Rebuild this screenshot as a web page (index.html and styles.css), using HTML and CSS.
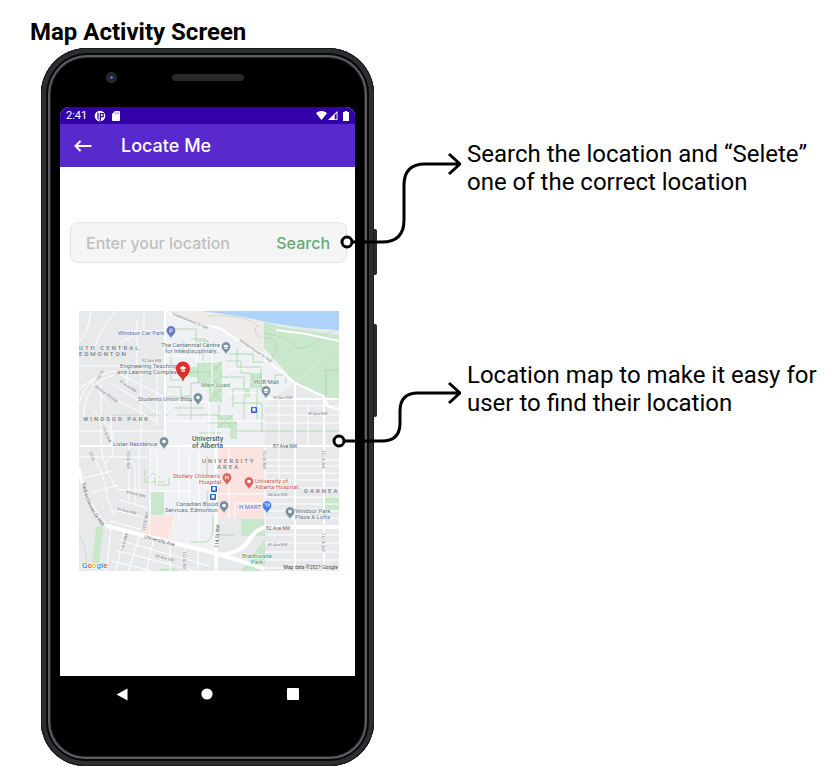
FILE: index.html
```html
<!DOCTYPE html>
<html lang="en">
<head>
<meta charset="utf-8">
<meta name="viewport" content="width=device-width, initial-scale=1">
<title>Map Activity Screen</title>
<link rel="stylesheet" href="styles.css">
</head>
<body>
<main class="board">
  <h1 class="board-title">Map Activity Screen</h1>
  <div class="board-body">
    <section class="phone" aria-label="Phone">
      <span class="side-key power"></span>
      <span class="side-key volume"></span>
      <div class="bezel-top">
        <span class="camera"></span>
        <span class="speaker"></span>
      </div>
      <div class="screen">
        <div class="status-bar">
          <span class="clock">2:41</span>
          <svg class="status-app" width="12" height="12" viewBox="0 0 12 12"><circle cx="6" cy="6" r="5.3" fill="#fff"/><path d="M4 2.500v7M6.300 11V3.500h2.900v3.200H6.300" fill="none" stroke="#3202a8" stroke-width="1.200"/></svg>
          <svg class="status-card" width="8" height="10" viewBox="0 0 8 10"><path d="M3 0h4a1 1 0 0 1 1 1v8a1 1 0 0 1-1 1H1a1 1 0 0 1-1-1V3z" fill="#fff"/><path d="M3.2 1.4v1.8M4.8 1.4v1.8M6.4 1.4v1.8" stroke="#3202a8" stroke-width=".5"/></svg>
          <span class="status-right">
            <svg width="11" height="9" viewBox="0 0 11 9"><path d="M5.5 9 0 2.2C3-.7 8-.7 11 2.2z" fill="#fff"/></svg>
            <svg width="10" height="9" viewBox="0 0 10 9"><path d="M0 9 9.5 0v9z" fill="#fff"/><path d="M6.7 4v4.2h1.9V2.2z" fill="#3202a8"/></svg>
            <svg class="battery" width="6" height="10" viewBox="0 0 6 10"><path d="M1.8 0h2.4v1H6v9H0V1h1.8z" fill="#fff"/></svg>
          </span>
        </div>
        <header class="app-bar">
          <button class="back" type="button" aria-label="Back"><svg width="18" height="12" viewBox="0 0 18 12"><path d="M17.5 6H1.5M6.5 1l-5 5 5 5" fill="none" stroke="#fff" stroke-width="2"/></svg></button>
          <h2 class="app-title">Locate Me</h2>
        </header>
        <div class="content">
          <form class="search">
            <input class="search-input" type="text" aria-label="Location" placeholder="Enter your location">
            <button class="search-button" type="button">Search</button>
          </form>
          <svg class="map" viewBox="0 0 260 260" role="img" aria-label="Campus map">
            <defs>
              <g id="pin"><path d="M0 0C-1-4-4.700-4.700-4.700-8.500a4.700 4.700 0 0 1 9.400 0C4.700-4.700 1-4 0 0z" fill="currentColor" stroke="#f4f6f8" stroke-width=".6"/></g>
              <g id="dot"><use href="#pin"/><circle cy="-8.500" r="1.800" fill="#fff"/></g>
              <g id="cap"><use href="#pin"/><path d="M-3-9 0-10.500 3-9 0-7.500zM-1.800-7.800v1.300Q0-5.300 1.800-6.500v-1.300L0-6.800z" fill="#fff"/></g>
              <g id="stop"><rect x="-3" y="-3" width="6" height="6" rx="1" fill="#1a62c9"/><path d="M-1.200-1.800h2.400v2.600h-2.400zM-1.200 1v1M1.200 1v1" fill="#fff" stroke="#fff" stroke-width=".6"/></g>
              <path id="drive" d="M3 172Q7 196 24 216"/>
            </defs>
            <path fill="#e8e9eb" d="M0 0h260v260H0z"/>
            <path fill="#eff1f4" d="M87 0h40l58 37 31 35-30 22v42h-47v107l-68-20V137H86z"/>
            <path fill="#eeebe8" d="M88 0h40l57 11v31L145 19 115 14z"/>
            <path fill="#aed3fa" d="M122 0h138v19l-34-2-33-5-33-7z"/>
            <path fill="#c9e7ca" d="M185 11l18 5 57 8v65l-16-4-28-14-31-34z"/>
            <path fill="#fbe3df" d="M139 137h46v70h-46zM71 205h25l-5 25-28-7z"/>
            <g fill="#c9e7ca">
              <path d="M72 181h13v23H72zM17 216l8-3-5 39h-7zM162 208h24v17h-24zM186 228v32h-24zM245 185h15v14h-15zM80 258l14-1 8 3H80z"/>
              <path d="M130 51h13v40h-13zM171 62h12v15h-12zM165 77h6v9h-6zM138 104h16v13h-16zM151 110h7v18h-7zM108 56h11v10h-11zM119 51h12v21h-12z"/>
            </g>
            <g fill="none" stroke="#a8d7aa" stroke-width=".8">
              <path d="M90 18h27v12h12v10M104 30v12h20v9M88 76h14v9h10v-13h20M88 86h24v23M95 97h30M130 51l13 13-13 13 13 14M143 51l-13 13 13 13-13 14M171 62l12 15M183 62l-12 15M150 43h24v8h10M158 38v18h24v24M148 50h14v12h9M143 66h22v12h-11v18M98 104h42v-10M128 112h30M120 122h22M155 92h28v30M165 86v22M178 78v30M138 104l16 13M154 104l-16 13M158 120h102M119 51v21M108 61h23M88 55h20M186 70h10v-6h11v8M92 45v24h14M66 159v12h20M68 168l6-6 7 5M76 166v8h14v-8"/>
              <path d="M112 28h14l10 14M111 231h14q8 0 9-12v-16M139 224h16M128 180v20M128 145v20M245 59h15M247 59v27"/>
            </g>
            <g fill="none" stroke="#8dba93" stroke-width=".5" stroke-dasharray="2 1">
              <path d="M129 5q35-2 49 9-5 10 6 13 12-2 14 10-8 12-4 17M185 22q24 4 32 14 14 4 24-10l19-9"/><path d="M0 224q9 14 7 34M33 104h56"/>
            </g>
            <g fill="none" stroke="#fff" stroke-width="1">
              <path d="M12 0Q9 24 0 31M37 0Q18 20 12 49M65 0v20L40 32M0 55h86M48 55v20M62 55v80M78 55v60M48 20h38M38 62l48 24M34 73l50 32M28 84l50 26M0 92q10-30 38-32M5 110q-2-38 30-46M0 78l26-18M22 73v62M14 100l20 20v15M32 104v31M0 120h86M58 8v46M31 95 12 70"/>
              <path d="M50 135v55M60 135v39q0 8 8 9M0 146h68M7 135q18 22 22 54l7 17M22 135q5 32 18 44h28M4 167l29-7M12 182l27-8M40 189l29 8M35 199l32 8M31 210l33 9M26 153q10-8 8-18M46 151q10-4 10 8v34M78 141v35M71 137v89"/>
              <path d="M32 217l-5 43M46 219l-9 41M61 224l-12 36M75 227l-8 33M91 232v28M106 235v25M119 240v20M40 229l90 26M36 239l80 21M32 250l40 10"/>
              <path d="M186 95h74M186 104h74M186 112h74M200 88v47M229 94v41M186 149h74M186 155h74M186 162h74M186 169h74M186 177h74M186 186h74M186 193h74M186 200h74M186 207h74M188 224h72M186 232h74M186 241h74M186 249h74M186 257h74M186 137v80M200 137v30"/>
              <path d="M88 45h30v6h20M95 91h35v45M100 137v70M96 205l-8 27M110 143v60M72 180h40M120 141v90M137 112v23M150 137v70M139 183h47M156 207v-15h30M148 58h20M133 42v40M148 82h30M88 110h98"/>
            </g>
            <g fill="none" stroke="#fff" stroke-linejoin="round">
              <path stroke-width="2" d="M86 0v135M86 0q20 12 40 15 15 0 22 7l37 25 31 25 28 13 5 10 11 4M216 72v188M245 85v175M197 19l30 4 33 7M0 135h260M186 88h74"/>
              <path stroke-width="3" d="M137 137v123M0 157q5 34 28 58"/>
              <path stroke-width="4" d="M28 215l103 26 28 8 27 9M138 244q22-1 31-13 8-15 21-15h70"/>
              <path stroke="#d8edd8" stroke-width="1" d="M218 70l42-36"/>
            </g>
            <g class="road">
              <text x="63" y="51">92 Ave NW</text><text x="194" y="88">90 Ave NW</text><text x="229" y="104">89 Ave NW</text>
              <text x="189" y="185">84 Ave NW</text><text x="189" y="235">81 Ave NW</text>
              <text transform="translate(93 4) rotate(22)">Saskatchewan Dr NW</text>
              <text transform="translate(160 30) rotate(35)">Saskatchewan Dr NW</text>
              <text transform="translate(15 76) rotate(35)">Windsor Rd NW</text>
              <text transform="translate(40 71) rotate(33)">91 Ave NW</text>
              <text transform="translate(47 182) rotate(14)">84 Ave NW</text>
              <text transform="translate(38 199) rotate(14)">83 Ave NW</text>
              <text transform="translate(76 246) rotate(14)">80 Ave NW</text>
              <text transform="translate(19 70) rotate(-58)">120 St</text>
              <text transform="translate(22 115) rotate(65)">119 St NW</text>
              <text transform="translate(9 140) rotate(65)">120 St</text>
              <text transform="translate(48 139) rotate(90)">118 St NW</text>
              <text transform="translate(66 220) rotate(-80)">117 St NW</text>
              <text transform="translate(44 241) rotate(-75)">118 St NW</text>
              <text transform="translate(184 139) rotate(90)">112 St NW</text>
              <text transform="translate(243 139) rotate(90)">110 St NW</text>
              <text transform="translate(243 222) rotate(90)">110 St NW</text>
              <text transform="translate(104 240) rotate(90)">115 St NW</text>
            </g>
            <g class="avenue">
              <text x="194" y="137">87 Ave NW</text><text x="187" y="219">82 Ave NW</text>
              <text transform="translate(65 227) rotate(15)">University Ave</text>
              <text transform="translate(139 237) rotate(-86)">114 St NW</text>
              <text><textPath href="#drive">Saskatchewan Dr NW</textPath></text>
            </g>
            <g class="district">
              <text x="0" y="39">UTH CENTRAL</text><text x="0" y="45">EDMONTON</text><text x="4" y="110">WINDSOR PARK</text>
              <text x="123" y="152">UNIVERSITY</text><text x="138" y="158">AREA</text><text x="225" y="182">GARNEA</text>
            </g>
            <g color="#78909c">
              <use href="#cap" x="147" y="44"/><use href="#dot" x="119" y="95"/><use href="#cap" x="187" y="88"/><use href="#dot" x="85" y="139"/><use href="#dot" x="145" y="203"/><use href="#dot" x="211" y="209"/>
            </g>
            <use href="#pin" x="92" y="28" color="#6572c4"/><path d="M91 22v-4h1.500a1.200 1.200 0 0 1 0 2.500H91" fill="none" stroke="#fff" stroke-width=".8"/>
            <use href="#pin" x="188" y="203" color="#4a80e8"/><path d="M185.500 192.500h1l1 2.500h2.500l.5-2h-3" fill="none" stroke="#fff" stroke-width=".7"/>
            <use href="#pin" x="148" y="175" color="#de625a"/><path d="M146.700 164.500v4M149.300 164.500v4M146.700 166.500h2.600" stroke="#fff" stroke-width=".8"/>
            <use href="#dot" x="170" y="179" color="#de625a"/>
            <use href="#stop" x="175" y="99"/><use href="#stop" x="135" y="178"/><use href="#stop" x="134" y="186"/>
            <g class="place">
              <text x="82" y="36">The Centennial Centre</text><text x="86" y="42">for Interdisciplinary..</text>
              <text x="41" y="57">Engineering Teaching</text><text x="38" y="63">and Learning Complex</text>
              <text x="59" y="90">Students Union Bldg</text><text x="175" y="73">HUB Mall</text><text x="34" y="135">Lister Residence</text>
              <text x="97" y="195">Canadian Blood</text><text x="86" y="201">Services, Edmonton</text>
              <text x="216" y="202">Windsor Park</text><text x="216" y="208">Plaza &amp; Lofts</text>
              <text class="parking" x="39" y="24">Windsor Car Park</text>
              <text class="green" x="122" y="76">Main Quad</text><text class="green" x="163" y="247">Braithwaite</text><text class="green" x="172" y="253">Park</text>
              <text class="health" x="94" y="167">Stollery Children's</text><text class="health" x="120" y="173">Hospital</text>
              <text class="health" x="176" y="172">University of</text><text class="health" x="176" y="178">Alberta Hospital..</text>
              <text class="shop" x="160" y="198">H MART</text>
            </g>
            <g class="campus"><text x="113" y="130">University</text><text x="113" y="137">of Alberta</text></g>
            <path d="M104 71c-1-6-7-6.500-7-13.500a7 7 0 0 1 14 0c0 7-6 7.500-7 13.500z" fill="#dc2f27"/>
            <path d="M100.500 57l3.500-2 3.500 2-3.500 2zM102 58.800v1.500q2 1 4 0v-1.500l-2 1z" fill="#fff"/>
            <text class="brand" x="3" y="257"><tspan fill="#4285f4">G</tspan><tspan fill="#ea4335">o</tspan><tspan fill="#f6b704">o</tspan><tspan fill="#4285f4">g</tspan><tspan fill="#34a853">l</tspan><tspan fill="#ea4335">e</tspan></text>
            <text class="credit" x="259" y="258">Map data ©2021 Google</text>
          </svg>
        </div>
      </div>
      <nav class="nav-bar">
        <button type="button" aria-label="Back"><svg width="12" height="13" viewBox="0 0 12 13"><path d="M11.500.5v12L.500 6.500z" fill="#fff"/></svg></button>
        <button type="button" aria-label="Home"><svg width="12" height="12" viewBox="0 0 12 12"><circle cx="6" cy="6" r="5.600" fill="#fff"/></svg></button>
        <button type="button" aria-label="Overview"><svg width="12" height="12" viewBox="0 0 12 12"><rect width="12" height="12" rx="1" fill="#fff"/></svg></button>
      </nav>
      <svg class="connectors" width="130" height="310" viewBox="0 0 130 310" aria-hidden="true">
        <g fill="none" stroke="#000" stroke-width="3">
          <path d="M21 99h30q22 0 22-22V42q0-21 21-21h34M118 11l11 10-11 10"/>
          <path d="M13 298h38q18 0 18-18v-12q0-18 18-18h41M118 240l11 10-11 10"/>
          <circle cx="16" cy="99" r="5" fill="#fff"/>
          <circle cx="8" cy="298" r="5" fill="#fff"/>
        </g>
      </svg>
    </section>
    <aside class="notes">
      <p>Search the location and “Selete”<br>one of the correct location</p>
      <p>Location map to make it easy for<br>user to find their location</p>
    </aside>
  </div>
</main>
</body>
</html>
```
FILE: styles.css
```css
* { box-sizing: border-box; }
body { margin: 0; background: #fff; color: #000; font-family: Roboto, "Liberation Sans", sans-serif; }
button { padding: 0; border: 0; background: none; font: inherit; cursor: pointer; }
svg { display: block; }

.board { padding-top: 18px; }
.board-title { margin: 0 0 2px 30px; font-size: 24px; line-height: 28px; font-weight: 700; }
.board-body { display: flex; align-items: flex-start; gap: 93px; padding-left: 41px; }

.phone {
  position: relative;
  flex: 0 0 333px;
  min-width: 0;
  padding: 0 19px;
  background: #000;
  border-radius: 46px 46px 44px 44px;
  box-shadow: inset 0 0 0 1px #1b1b1d, inset 0 0 0 5px #2d2e30, inset 0 0 0 7px #08080a, inset 0 0 0 9px #5b5d63, inset 0 0 0 10px #26272a;
}
.side-key { position: absolute; left: 100%; width: 3px; background: #2a2b2d; border-radius: 0 2px 2px 0; }
.power { top: 181px; height: 46px; }
.volume { top: 276px; height: 93px; }

.bezel-top { display: flex; align-items: center; height: 59px; padding-left: 46px; gap: 55px; }
.camera { width: 11px; height: 11px; border-radius: 50%; background: radial-gradient(#5b66a8 0 1px, #1b2040 2px 3px, #29292c 4px); }
.speaker { width: 72px; height: 7px; border-radius: 4px; background: #29292a; }

.screen { overflow: hidden; border-radius: 9px 9px 0 0; background: #fff; }
.status-bar { display: flex; align-items: center; height: 17px; padding: 0 6px; background: #3202a8; color: #fff; font-size: 11px; }
.status-app { margin-left: 7px; }
.status-card { margin-left: 6px; }
.status-right { display: flex; align-items: center; gap: 1px; margin-left: auto; }
.battery { margin-left: 4px; }
.app-bar { display: flex; align-items: center; height: 43px; padding-left: 14px; gap: 29px; background: #5829cc; color: #fff; }
.app-title { margin: 0; font: 500 18px/24px Inter, sans-serif; }

.content { padding: 55px 8px 105px 10px; }
.search { display: flex; align-items: center; height: 41px; margin: 0 0 48px; padding: 0 16px 0 15px; background: #f5f5f5; border: 1px solid #e3e3e3; border-radius: 8px; font: 500 16px/20px Inter, sans-serif; }
.search-input { flex: 1; min-width: 0; padding: 0; border: 0; outline: 0; background: none; font: inherit; color: #333; }
.search-input::placeholder { color: #c0c0c0; opacity: 1; }
.search-button { color: #62aa76; }

.map { width: calc(100% - 17px); margin-left: 9px; font-family: Roboto, sans-serif; }
.place { font-size: 6px; fill: #66757f; paint-order: stroke; stroke: #f3f5f7; stroke-width: 1px; }
.parking { fill: #5f6cb8; }
.green { fill: #589760; }
.health { fill: #d0584f; }
.shop { fill: #4170d0; }
.campus { font-size: 7px; font-weight: 500; fill: #476373; paint-order: stroke; stroke: #f3f5f7; stroke-width: 1px; }
.district { font-size: 6px; font-weight: 500; letter-spacing: 2px; fill: #76828d; }
.road { font-size: 4px; fill: #858a90; }
.avenue { font-size: 5px; fill: #5c6267; }
.brand { font-size: 8px; font-weight: 500; paint-order: stroke; stroke: #fff; stroke-width: 1px; }
.credit { font-size: 5px; fill: #444; text-anchor: end; }

.nav-bar { display: flex; justify-content: space-around; height: 90px; padding: 0 19px; }
.nav-bar button { display: grid; place-items: center; width: 36px; height: 36px; }

.connectors { position: absolute; left: 290px; top: 95px; }

.notes { display: flex; flex-direction: column; gap: 165px; padding-top: 92px; font-size: 24px; line-height: 28px; }
.notes p { margin: 0; white-space: nowrap; }
```
